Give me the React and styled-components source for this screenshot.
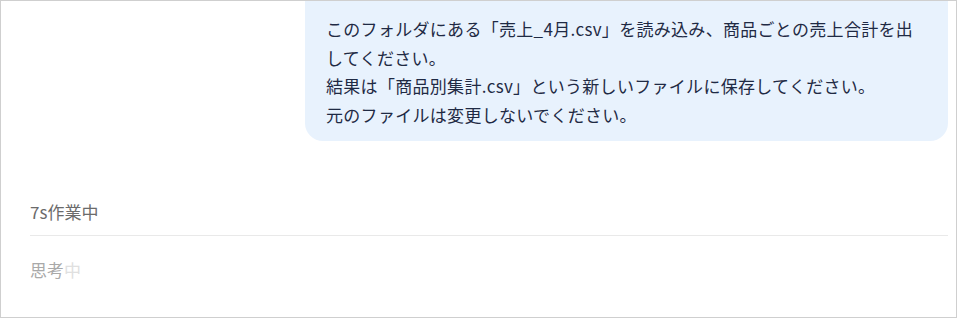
import styled, { createGlobalStyle } from "styled-components";

const GlobalStyle = createGlobalStyle`
    html, body {
        margin: 0;
        padding: 0;
        background: #fff;
    }
    body {
        font-family: "Noto Sans CJK JP", "Noto Sans", sans-serif;
    }
`;

const Frame = styled.div`
    box-sizing: border-box;
    width: 957px;
    height: 318px;
    border: 1px solid #cfcfcf;
    overflow: hidden;
    background: #fff;
`;

const MessageRow = styled.div`
    display: flex;
    justify-content: flex-end;
    padding-right: 8px;
`;

const Bubble = styled.div`
    box-sizing: border-box;
    width: 643px;
    padding: 14px 24px 12px 21px;
    background: #e8f2fd;
    border-radius: 0 0 18px 18px;
    color: #1f2a44;
    font-size: 17px;
    line-height: 28.5px;
    letter-spacing: 0.3px;

    p {
        margin: 0;
    }
`;

const Activity = styled.section`
    padding: 0 8px 0 29px;
`;

const StatusLine = styled.div`
    margin-top: 59px;
    padding-bottom: 11px;
    border-bottom: 1px solid #e9e9e9;
    font-size: 17px;
    line-height: 24px;
    color: #6b6b6b;
`;

const Thinking = styled.div`
    margin-top: 22px;
    font-size: 17px;
    line-height: 24px;
    color: #a9a9a9;

    span {
        color: #e0e0e0;
    }
`;

function App() {
    return (
        <>
            <GlobalStyle />
            <Frame>
                <MessageRow>
                    <Bubble>
                        <p>このフォルダにある「売上_4月.csv」を読み込み、商品ごとの売上合計を出してください。</p>
                        <p>結果は「商品別集計.csv」という新しいファイルに保存してください。</p>
                        <p>元のファイルは変更しないでください。</p>
                    </Bubble>
                </MessageRow>
                <Activity>
                    <StatusLine>7s作業中</StatusLine>
                    <Thinking>思考<span>中</span></Thinking>
                </Activity>
            </Frame>
        </>
    )
}

export default App
